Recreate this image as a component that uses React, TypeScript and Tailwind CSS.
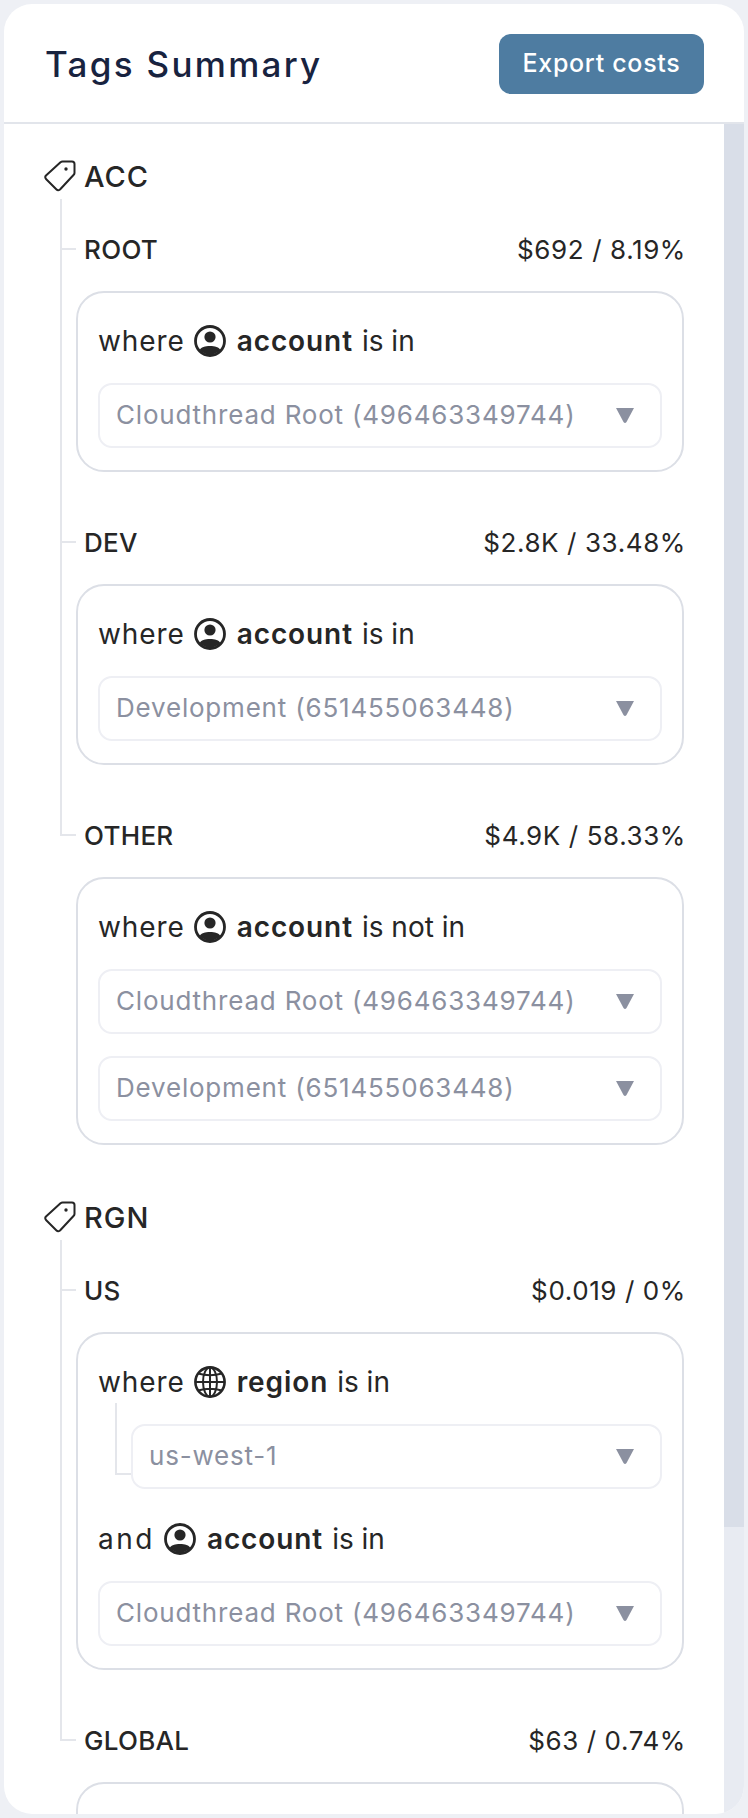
import type { ReactNode } from 'react'

function TagIcon() {
  return (
    <svg width="32" height="32" viewBox="0 0 32 32" fill="none" className="shrink-0">
      <path
        d="M2 15.5 L16.5 2.2 Q17.5 1.5 18.5 1.5 H28 Q30.5 1.5 30.5 4 V13 Q30.5 14 29.5 15 L16 29.5 Q14 31 12.5 29.5 L2 19 Q.5 17 2 15.5Z"
        stroke="#262626"
        strokeWidth="2"
        strokeLinejoin="round"
      />
      <circle cx="22" cy="9" r="1.7" fill="#262626" />
    </svg>
  )
}

function UserIcon() {
  return (
    <svg width="32" height="32" viewBox="0 0 32 32" fill="none" className="shrink-0">
      <circle cx="16" cy="16" r="14.500" stroke="#262626" strokeWidth="2.800" />
      <circle cx="16" cy="12" r="5.600" fill="#262626" />
      <path d="M5.5 25 C8 19.500 24 19.500 26.500 25 A14.500 14.500 0 0 1 5.500 25Z" fill="#262626" />
    </svg>
  )
}

function GlobeIcon() {
  return (
    <svg width="32" height="32" viewBox="0 0 32 32" fill="none" stroke="#262626" strokeWidth="2" className="shrink-0">
      <circle cx="16" cy="16" r="14.600" strokeWidth="2.600" />
      <ellipse cx="16" cy="16" rx="7" ry="14.600" />
      <path d="M16 1.400 V30.600 M1.400 16 H30.600 M4 7.500 Q16 11 28 7.500 M4 24.500 Q16 21 28 24.500" />
    </svg>
  )
}

function Select({ label, className = '' }: { label: string; className?: string }) {
  return (
    <div
      className={`flex h-[65px] items-center justify-between rounded-[14px] border-2 border-[#eeeff4] pl-4 pr-[25px] text-[26px] tracking-[0.8px] text-[#8b90a0] ${className}`}
    >
      <span className="mb-[2px]">{label}</span>
      <svg width="20" height="17" viewBox="0 0 20 17" className="shrink-0">
        <path d="M1 1 H19 L11.500 15 Q10 17 8.500 15Z" fill="#8b90a0" />
      </svg>
    </div>
  )
}

function Clause({ word, icon, field, op }: { word: string; icon: ReactNode; field: string; op: string }) {
  return (
    <div className="flex h-[36px] items-center text-[28px] tracking-[0.9px] text-[#262626]">
      <span className={word === 'and' ? 'tracking-[2.5px]' : ''}>{word}</span>
      <span className="ml-[9px] mr-[11px]">{icon}</span>
      <span className="font-semibold">{field}</span>
      <span className="ml-[9px] tracking-normal">{op}</span>
    </div>
  )
}

function Rule({ name, cost, first, last, children }: { name: string; cost: string; first?: boolean; last?: boolean; children: ReactNode }) {
  return (
    <div className={`relative pl-4 ${first ? 'pt-[32px]' : 'pt-[52px]'}`}>
      <span className={`absolute left-0 top-0 w-[2px] bg-[#e4e6eb] ${last ? 'h-[71px]' : 'h-full'}`} />
      <div className="relative mb-6 flex h-[36px] items-center justify-between pl-2 text-[#262626]">
        <span className="absolute -left-[14px] top-[17px] h-[2px] w-[14px] bg-[#e4e6eb]" />
        <span className="text-[26px] font-medium tracking-[0.3px]">{name}</span>
        <span className="-mr-[2px] text-[26px] tracking-[0.6px]">{cost}</span>
      </div>
      {children}
    </div>
  )
}

function Box({ children }: { children: ReactNode }) {
  return <div className="flex flex-col rounded-[28px] border-2 border-[#dcdfe6] px-5 pb-[22px] pt-[30px]">{children}</div>
}

function Group({ name, className = '', children }: { name: string; className?: string; children: ReactNode }) {
  return (
    <div className={className}>
      <div className="flex h-[36px] items-center gap-2 text-[29px] font-medium tracking-[1px] text-[#262626]">
        <TagIcon />
        <span className="mt-[2px]">{name}</span>
      </div>
      <div className="ml-4 mt-[5px]">{children}</div>
    </div>
  )
}

const ROOT_ACCOUNT = 'Cloudthread Root (496463349744)'
const DEV_ACCOUNT = 'Development (651455063448)'

export default function App() {
  return (
    <div className="h-[1818px] w-[748px] overflow-hidden bg-[#eef0f5] p-1 font-[Inter,sans-serif]">
      <div className="flex h-full flex-col overflow-hidden rounded-[28px] bg-white">
        <div className="flex h-[120px] shrink-0 items-center justify-between border-b-2 border-[#e2e5eb] pl-[41px] pr-10 pt-[2px]">
          <h1 className="text-[35px] font-medium tracking-[2.3px] text-[#18233f]">Tags Summary</h1>
          <button className="h-[60px] w-[205px] rounded-[12px] bg-[#4e7ca1] text-[25px] font-medium tracking-[0.7px] text-white">
            Export costs
          </button>
        </div>
        <div className="flex min-h-0 flex-1">
          <div className="min-w-0 flex-1 overflow-hidden pl-10 pr-10 pt-[34px]">
            <Group name="ACC">
              <Rule name="ROOT" cost="$692 / 8.19%" first>
                <Box>
                  <Clause word="where" icon={<UserIcon />} field="account" op="is in" />
                  <Select label={ROOT_ACCOUNT} className="mt-6" />
                </Box>
              </Rule>
              <Rule name="DEV" cost="$2.8K / 33.48%">
                <Box>
                  <Clause word="where" icon={<UserIcon />} field="account" op="is in" />
                  <Select label={DEV_ACCOUNT} className="mt-6" />
                </Box>
              </Rule>
              <Rule name="OTHER" cost="$4.9K / 58.33%" last>
                <Box>
                  <Clause word="where" icon={<UserIcon />} field="account" op="is not in" />
                  <Select label={ROOT_ACCOUNT} className="mt-6" />
                  <Select label={DEV_ACCOUNT} className="mt-[22px]" />
                </Box>
              </Rule>
            </Group>
            <Group name="RGN" className="mt-[54px]">
              <Rule name="US" cost="$0.019 / 0%" first>
                <Box>
                  <Clause word="where" icon={<GlobeIcon />} field="region" op="is in" />
                  <div className="relative ml-[33px] mt-6">
                    <span className="absolute -left-4 -top-[21px] h-[72px] w-4 border-b-2 border-l-2 border-[#e4e6eb]" />
                    <Select label="us-west-1" />
                  </div>
                  <div className="mt-8">
                    <Clause word="and" icon={<UserIcon />} field="account" op="is in" />
                  </div>
                  <Select label={ROOT_ACCOUNT} className="mt-6" />
                </Box>
              </Rule>
              <Rule name="GLOBAL" cost="$63 / 0.74%" last>
                <div className="h-[120px] rounded-[28px] border-2 border-[#dcdfe6]" />
              </Rule>
            </Group>
          </div>
          <div className="flex w-5 shrink-0 flex-col bg-[#e8ebf2]">
            <div className="h-[1403px] bg-[#d9dee8]" />
          </div>
        </div>
      </div>
    </div>
  )
}
